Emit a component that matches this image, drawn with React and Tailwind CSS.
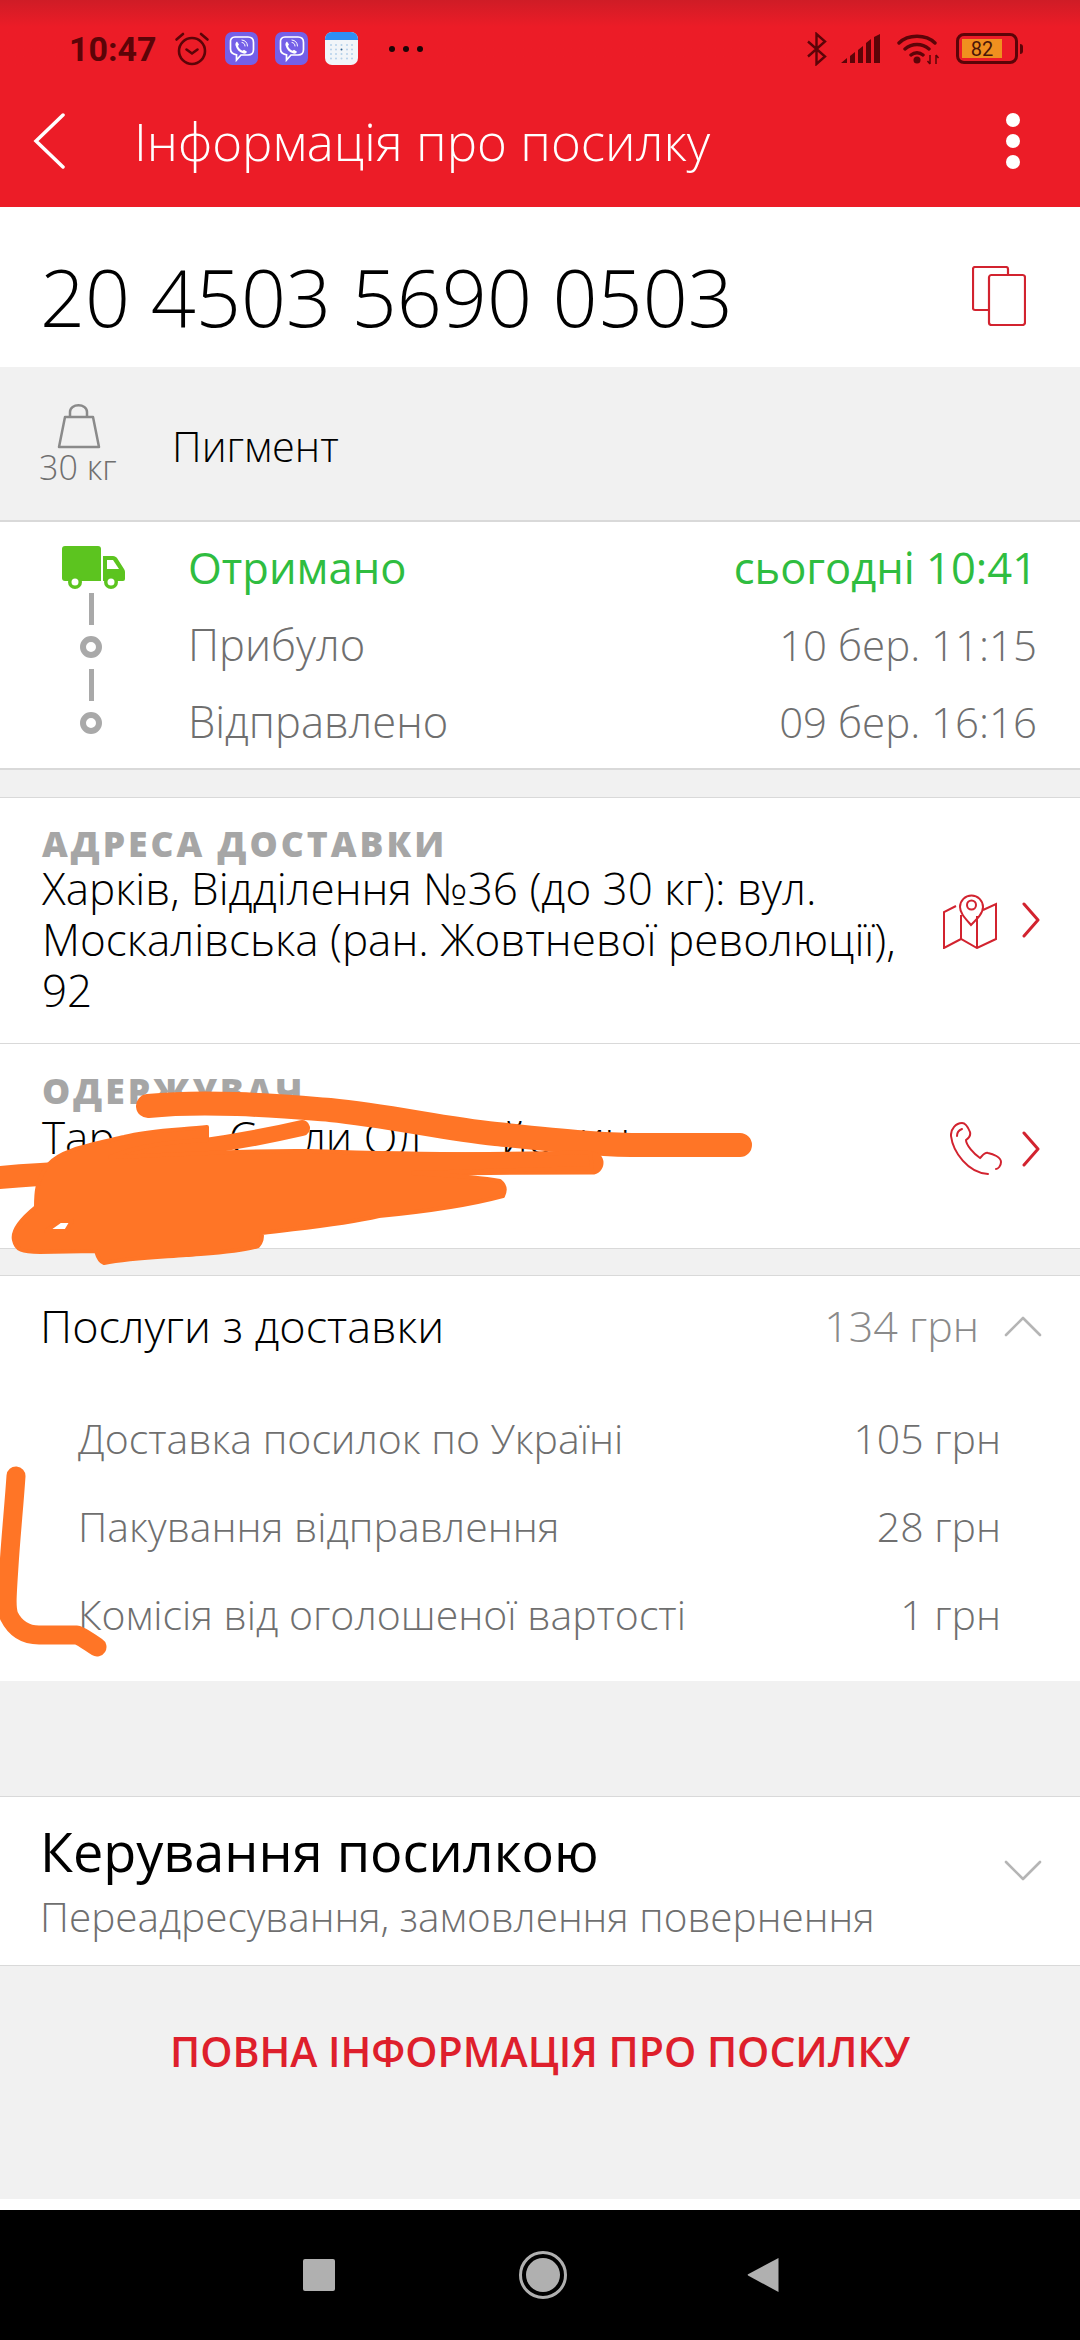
const font = { fontFamily: '"Open Sans", "Noto Sans", sans-serif' };

const Viber = () => (
  <svg width="33" height="33" viewBox="0 0 33 33" fill="none">
    <rect width="33" height="33" rx="7" fill="#7460e8" />
    <path d="M10 5h13c3.500 0 5.500 2 5.500 5.500v7c0 3.500-2 5.500-5.500 5.500h-7l-4.500 5v-5.200c-4-.6-6-2.500-6-5.800v-6.500C5 7 7 5 10 5z" stroke="#fff" strokeWidth="1.700" />
    <path d="M12 9.500l2 3-1 1.500c1 2.500 2.500 4 4.500 4.800l1.500-1 3 2c-.5 1.500-2 2.200-3.500 1.800-4.500-1.300-7-4.300-8-8.300-.3-1.500.2-3 1.500-3.800z" fill="#fff" />
    <path d="M17 8c3 .2 5.500 2.500 5.500 6M17 10.500c1.800.2 3 1.500 3 3.500" stroke="#fff" strokeWidth="1" strokeLinecap="round" />
  </svg>
);

const Calendar = () => (
  <svg width="33" height="33" viewBox="0 0 33 33">
    <rect width="33" height="33" rx="7" fill="#f1f5f9" />
    <path d="M0 8V7a7 7 0 0 1 7-7h19a7 7 0 0 1 7 7v1z" fill="#2f8ff5" />
    {[13, 17.500, 22, 26.500].map((y) =>
      [6, 11, 16.500, 22, 27].map((x) => (
        <circle key={`${x}-${y}`} cx={x} cy={y} r="1" fill={x === 16.500 && y === 17.500 ? '#2c5f8f' : '#b5d0ea'} />
      ))
    )}
  </svg>
);

const StatusBar = () => (
  <div className="flex h-[67px] items-end bg-gradient-to-b from-[#cf1c26] to-[#ec1c27] to-[40%] pl-[69px] pr-[57px]">
    <div className="flex h-[37px] flex-1 items-center">
      <span className="w-[106px] text-[34px] font-bold leading-none text-[#5c0408]" style={{ fontFamily: '"Roboto", sans-serif' }}>10:47</span>
      <svg width="36" height="36" viewBox="0 0 36 36" fill="none" stroke="#5c0408" strokeWidth="2.600" strokeLinecap="round" className="-ml-[1px] mr-[15px]">
        <circle cx="18" cy="20" r="13" />
        <path d="M12.500 18.500l5.500 4 5.500-4M2.500 8.500L9 3M33.500 8.500L27 3" />
      </svg>
      <div className="flex gap-[17px]">
        <Viber />
        <Viber />
        <Calendar />
      </div>
      <div className="ml-[31px] flex gap-[8px]">
        <span className="h-[6px] w-[6px] rounded-full bg-[#1c0506]" />
        <span className="h-[6px] w-[6px] rounded-full bg-[#1c0506]" />
        <span className="h-[6px] w-[6px] rounded-full bg-[#1c0506]" />
      </div>
    </div>
    <div className="flex h-[37px] items-center">
      <svg width="22" height="34" viewBox="0 0 22 34" fill="none" stroke="#5c0408" strokeWidth="2.400" className="mr-[13px]">
        <path d="M2 9.500l17 15L10.500 32V2L19 9.500 2 24.500" />
      </svg>
      <svg width="41" height="29" viewBox="0 0 41 29" fill="#5c0408" className="mr-[15px]">
        <path d="M0 29l6-5v5zM9 22l5-4v11H9zM17 16l5-4v17h-5zM25 9l5-4v24h-5zM33 3l6-3v29h-6z" />
      </svg>
      <svg width="44" height="32" viewBox="0 0 44 32" fill="none" className="mr-[15px]">
        <path d="M2 10C11 1 29 1 38 10M8 16c7-6 17-6 24 0M14 22c3.500-3 8.500-3 12 0" stroke="#5c0408" strokeWidth="3.400" strokeLinecap="round" />
        <circle cx="20" cy="27" r="3.500" fill="#5c0408" />
        <path d="M33 22v9M33 31l-2.500-3M39 31v-9M39 22l2.500 3" stroke="#5c0408" strokeWidth="1.500" />
      </svg>
      <div className="flex items-center">
        <div className="flex h-[31px] w-[62px] items-center rounded-[8px] border-[3.500px] border-[#5c0408] p-[3px]">
          <div className="flex h-full w-[40px] items-center justify-center bg-[#f0901f] text-[20px] leading-none text-[#4a1608]" style={{ fontFamily: '"Roboto", sans-serif' }}>82</div>
        </div>
        <div className="ml-[2px] h-[10px] w-[3px] rounded-r-sm bg-[#5c0408]" />
      </div>
    </div>
  </div>
);

const Header = () => (
  <div className="flex h-[140px] items-center bg-[#ec1c27] pl-[33px] pr-[60px] pt-[8px]">
    <svg width="32" height="56" viewBox="0 0 32 56" fill="none" stroke="#fff" strokeWidth="3.500" strokeLinecap="round">
      <path d="M30 2L3 28l27 26" />
    </svg>
    <h1 className="ml-[69px] flex-1 text-[51px] font-light leading-none text-white">Інформація про посилку</h1>
    <div className="flex flex-col gap-[7px]">
      <span className="h-[14px] w-[14px] rounded-full bg-white" />
      <span className="h-[14px] w-[14px] rounded-full bg-white" />
      <span className="h-[14px] w-[14px] rounded-full bg-white" />
    </div>
  </div>
);

const TimelineRow = ({ label, date, green }) => (
  <div className={`flex h-[77px] items-center justify-between ${green ? 'font-medium text-[#2fbd40]' : 'font-light text-[#6f6f6f]'}`}>
    <span className="text-[43.500px]">{label}</span>
    <span className={green ? 'text-[43.500px]' : 'text-[42px]'}>{date}</span>
  </div>
);

const Dot = () => <span className="h-[22px] w-[22px] shrink-0 rounded-full border-[6px] border-[#a9a9a9] bg-white" />;
const Stem = () => <span className="h-[32px] w-[5px] shrink-0 bg-[#a9a9a9]" />;

const Timeline = () => (
  <section className="flex h-[248px] border-b-2 border-[#d9d9d9] bg-white pl-[62px] pr-[43px] pt-[7px]">
    <div className="flex w-[126px] shrink-0 flex-col items-start">
      <svg width="63" height="44" viewBox="0 0 63 44" fill="#5cc41f" className="mt-[17px] mb-[3px]">
        <path d="M3 0h33a3 3 0 0 1 3 3v32H3a3 3 0 0 1-3-3V3a3 3 0 0 1 3-3z" />
        <path d="M41 10h10c2 0 3 1 4 2l7 11c.7 1 1 2 1 3v7a2 2 0 0 1-2 2H41z" />
        <path d="M45 14h6l6 9H45z" fill="#fff" />
        <circle cx="13" cy="36" r="7" fill="#5cc41f" />
        <circle cx="13" cy="36" r="3.500" fill="#fff" />
        <circle cx="49" cy="36" r="7" fill="#5cc41f" />
        <circle cx="49" cy="36" r="3.500" fill="#fff" />
      </svg>
      <div className="flex w-[58px] flex-col items-center gap-[11px]">
        <Stem />
        <Dot />
        <Stem />
        <Dot />
      </div>
    </div>
    <div className="flex-1">
      <TimelineRow label="Отримано" date="сьогодні 10:41" green />
      <TimelineRow label="Прибуло" date="10 бер. 11:15" />
      <TimelineRow label="Відправлено" date="09 бер. 16:16" />
    </div>
  </section>
);

const Label = ({ children }) => (
  <div className="text-[35.500px] font-extrabold leading-[40px] tracking-[3px] text-[#a6a6a6]">{children}</div>
);

const Chevron = () => (
  <svg width="18" height="36" viewBox="0 0 18 36" fill="none" stroke="#d2232f" strokeWidth="3" strokeLinecap="round" strokeLinejoin="round">
    <path d="M2 2l14 16L2 34" />
  </svg>
);

const Fold = ({ up }) => (
  <svg width="38" height="22" viewBox="0 0 38 22" fill="none" stroke="#b5b5b5" strokeWidth="2.600" strokeLinecap="round" strokeLinejoin="round">
    <path d={up ? 'M2 20L19 3l17 17' : 'M2 2l17 17L36 2'} />
  </svg>
);

const MapIcon = () => (
  <svg width="58" height="58" viewBox="0 0 58 58" fill="none" stroke="#d2232f" strokeWidth="2">
    <path d="M29 34c-6-7-11-12-11-18a11.500 11.500 0 0 1 23 0c0 6-5 11-12 18z" />
    <circle cx="29.500" cy="14" r="4.500" />
    <path d="M14 15L2 21v36l17-9 16 9 19-9V13l-13 6M19 24v24M35 25v32" />
  </svg>
);

const PhoneIcon = () => (
  <svg width="52" height="54" viewBox="0 0 52 54" fill="none" stroke="#d2232f" strokeWidth="2" strokeLinecap="round">
    <path d="M38 52C18 51 3 30 1 14 .5 7 6 1 12 1c4 0 6 4 8 9 1 4-1 6-4 8 0 5 8 14 14 18 3-3 5-6 8-5 5 1 13 4 13 9 0 4-3 7-5 7" />
    <path d="M7 14c0-3 2-6 5-7" />
  </svg>
);

const Address = () => (
  <section className="flex h-[247px] items-start border-y border-[#d9d9d9] bg-white pl-[42px] pr-[40px] pt-[25px]">
    <div className="min-w-0 flex-1">
      <Label>АДРЕСА ДОСТАВКИ</Label>
      <p className="w-[880px] text-[44px] font-light leading-[51px] text-black">
        Харків, Відділення №36 (до 30 кг): вул. Москалівська (ран. Жовтневої революції), 92
      </p>
    </div>
    <div className="mt-[68px] flex items-center gap-[22px]">
      <MapIcon />
      <Chevron />
    </div>
  </section>
);

const Recipient = () => (
  <section className="flex h-[205px] items-start border-b border-[#d9d9d9] bg-white pl-[42px] pr-[40px] pt-[26px]">
    <div className="min-w-0 flex-1">
      <Label>ОДЕРЖУВАЧ</Label>
      <p className="mt-[2px] whitespace-pre text-[44px] font-light leading-[51px] text-black">Тар          С    ли Ол       йович</p>
    </div>
    <div className="mt-[52px] flex items-center gap-[20px]">
      <PhoneIcon />
      <Chevron />
    </div>
  </section>
);

const ServiceRow = ({ name, price }) => (
  <div className="flex h-[88px] items-center justify-between text-[41px] font-light text-[#6f6f6f]">
    <span>{name}</span>
    <span>{price}</span>
  </div>
);

const Services = () => (
  <section className="h-[406px] border-t border-[#d9d9d9] bg-white">
    <div className="flex h-[100px] items-center pl-[40px] pr-[38px]">
      <span className="flex-1 text-[45px] font-light text-black">Послуги з доставки</span>
      <span className="text-[43px] font-light text-[#8a8a8a]">134 грн</span>
      <span className="ml-[25px]"><Fold up /></span>
    </div>
    <div className="pl-[78px] pr-[79px] pt-[19px]">
      <ServiceRow name="Доставка посилок по Україні" price="105 грн" />
      <ServiceRow name="Пакування відправлення" price="28 грн" />
      <ServiceRow name="Комісія від оголошеної вартості" price="1 грн" />
    </div>
  </section>
);

const Manage = () => (
  <section className="flex h-[170px] items-start border-y border-[#d9d9d9] bg-white pl-[40px] pr-[38px] pt-[24px]">
    <div className="flex-1">
      <h2 className="text-[54px] font-normal leading-[60px] text-black">Керування посилкою</h2>
      <p className="mt-[14px] text-[40.500px] font-light leading-[44px] text-[#6f6f6f]">Переадресування, замовлення повернення</p>
    </div>
    <span className="mt-[39px]"><Fold /></span>
  </section>
);

const NavBar = () => (
  <div className="relative flex h-[130px] items-center bg-black pl-[303px]">
    <span className="h-[32px] w-[32px] rounded-[2px] bg-[#b0b0b0]" />
    <span className="ml-[184px] flex h-[48px] w-[48px] items-center justify-center rounded-full border-[3px] border-[#b0b0b0]">
      <span className="h-[34px] w-[34px] rounded-full bg-[#b0b0b0]" />
    </span>
    <svg width="32" height="36" viewBox="0 0 32 36" fill="#b0b0b0" className="ml-[180px]">
      <path d="M31.500 1v34L1 18.500c-.5-.4-.5-1 0-1.300z" />
    </svg>
  </div>
);

// marker scribble painted over the recipient block and the service rows
const Scribble = () => (
  <svg className="absolute left-0 top-0" width="1080" height="2340" viewBox="0 0 1080 2340" fill="none" stroke="#ff7526" strokeLinecap="round" strokeLinejoin="round">
    <path d="M148 1106c60-6 130 0 182 4 60 6 110 18 166 24 60 6 110 12 158 11h86" strokeWidth="24" />
    <path d="M-5 1178c60-6 130-8 210-9 130-4 270-6 387-6" strokeWidth="23" />
    <path d="M120 1156c70-6 130-16 182-28" strokeWidth="16" />
    <path
      fillRule="evenodd"
      fill="#ff7526"
      strokeWidth="4"
      d="M207 1127C180 1130 150 1130 124 1137 90 1145 60 1150 48 1165 36 1180 36 1195 36 1207 20 1220 12 1232 14 1240 16 1250 22 1252 40 1252L96 1251C98 1258 100 1262 104 1263 130 1258 160 1257 186 1255 210 1253 240 1252 258 1246 262 1242 262 1238 262 1233 300 1228 340 1225 379 1216 420 1212 470 1205 503 1196 506 1190 505 1185 500 1181 470 1176 440 1175 413 1173L592 1168 590 1152C500 1156 400 1154 310 1151 240 1150 170 1155 110 1157 140 1145 170 1142 207 1140zM46 1231L60 1221H72L66 1231z"
    />
    <path d="M16 1476c-2 30-5 58-7 90-2 30-3 42 0 50 6 12 16 19 30 19h38c6 2 12 7 20 12" strokeWidth="19" />
  </svg>
);

export default function App() {
  return (
    <div className="relative flex h-[2340px] w-[1080px] flex-col overflow-hidden bg-[#f1f1f1]" style={font}>
      <StatusBar />
      <Header />
      <section className="flex h-[160px] items-center justify-between bg-white pl-[40px] pr-[54px] pt-[18px]">
        <span className="text-[79px] font-light leading-none text-black">20 4503 5690 0503</span>
        <svg width="54" height="60" viewBox="0 0 54 60" fill="none" stroke="#d2232f" strokeWidth="2.200">
          <path d="M36 9V3a2 2 0 0 0-2-2H3a2 2 0 0 0-2 2v39a2 2 0 0 0 2 2h14" strokeLinejoin="round" />
          <rect x="17" y="9" width="36" height="50" rx="2.500" />
        </svg>
      </section>
      <section className="flex h-[155px] items-center border-b-2 border-[#d9d9d9] bg-[#f1f1f1] pl-[39px]">
        <div className="flex w-[133px] flex-col items-start">
          <svg width="46" height="46" viewBox="0 0 46 46" fill="none" stroke="#8a8a8a" strokeWidth="2.500" className="ml-[17px]">
            <path d="M14 14V9c0-9 17-9 17 0v5M9 14h28l6 30H3z" strokeLinejoin="round" />
          </svg>
          <span className="mt-[1px] text-[34px] font-light leading-[34px] text-[#6f6f6f]">30 кг</span>
        </div>
        <span className="mt-[6px] text-[41.500px] font-light text-black">Пигмент</span>
      </section>
      <Timeline />
      <div className="h-[27px] shrink-0" />
      <Address />
      <Recipient />
      <div className="h-[26px] shrink-0" />
      <Services />
      <div className="h-[115px] shrink-0" />
      <Manage />
      <div className="flex h-[233px] shrink-0 items-start justify-center pt-[62px] text-[41px] font-semibold leading-[46px] text-[#de1f2c]">
        ПОВНА ІНФОРМАЦІЯ ПРО ПОСИЛКУ
      </div>
      <div className="h-[11px] shrink-0 bg-white" />
      <NavBar />
      <Scribble />
    </div>
  );
}
